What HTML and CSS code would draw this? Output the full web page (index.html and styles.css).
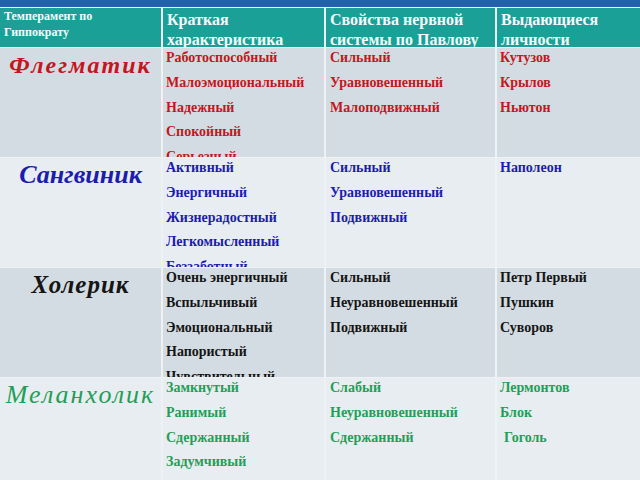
FILE: index.html
```html
<!DOCTYPE html>
<html lang="ru">
<head>
<meta charset="utf-8">
<link rel="stylesheet" href="styles.css">
</head>
<body>
<div class="topbar"></div>
<div class="table">
  <div class="hd hd-small">Темперамент по Гиппократу</div>
  <div class="hd hd-reg">Краткая характеристика</div>
  <div class="hd hd-reg">Свойства нервной системы по Павлову</div>
  <div class="hd">Выдающиеся личности</div>

  <div class="cell name row-a red"><span class="nm nm-fleg">Флегматик</span></div>
  <div class="cell row-a red"><ul class="lst"><li>Работоспособный</li><li>Малоэмоциональный</li><li>Надежный</li><li>Спокойный</li><li>Серьезный</li></ul></div>
  <div class="cell c3 row-a red"><ul class="lst"><li>Сильный</li><li>Уравновешенный</li><li>Малоподвижный</li></ul></div>
  <div class="cell c4 row-a red"><ul class="lst"><li>Кутузов</li><li>Крылов</li><li>Ньютон</li></ul></div>

  <div class="cell name row-b blue"><span class="nm nm-sang">Сангвиник</span></div>
  <div class="cell row-b blue"><ul class="lst"><li>Активный</li><li>Энергичный</li><li>Жизнерадостный</li><li>Легкомысленный</li><li>Беззаботный</li></ul></div>
  <div class="cell c3 row-b blue"><ul class="lst"><li>Сильный</li><li>Уравновешенный</li><li>Подвижный</li></ul></div>
  <div class="cell c4 row-b blue"><ul class="lst"><li>Наполеон</li></ul></div>

  <div class="cell name row-a black"><span class="nm nm-chol">Холерик</span></div>
  <div class="cell row-a black"><ul class="lst"><li>Очень энергичный</li><li>Вспыльчивый</li><li>Эмоциональный</li><li>Напористый</li><li>Чувствительный</li></ul></div>
  <div class="cell c3 row-a black"><ul class="lst"><li>Сильный</li><li>Неуравновешенный</li><li>Подвижный</li></ul></div>
  <div class="cell c4 row-a black"><ul class="lst"><li>Петр Первый</li><li>Пушкин</li><li>Суворов</li></ul></div>

  <div class="cell name row-b green"><span class="nm nm-mel">Меланхолик</span></div>
  <div class="cell row-b green"><ul class="lst"><li>Замкнутый</li><li>Ранимый</li><li>Сдержанный</li><li>Задумчивый</li></ul></div>
  <div class="cell c3 row-b green"><ul class="lst"><li>Слабый</li><li>Неуравновешенный</li><li>Сдержанный</li></ul></div>
  <div class="cell c4 row-b green"><ul class="lst"><li>Лермонтов</li><li>Блок</li><li class="indent">Гоголь</li></ul></div>
</div>
</body>
</html>
```

FILE: styles.css
```css
html, body {
  margin: 0;
  padding: 0;
  width: 640px;
  height: 480px;
  overflow: hidden;
  background: #eef2f5;
  font-family: "Liberation Serif", "Times New Roman", serif;
}

.topbar {
  height: 7px;
  background: #2161ad;
}

.table {
  display: grid;
  grid-template-columns: 161px 161px 169px 1fr;
  grid-template-rows: 39px 109px 109px 109px 102px;
  column-gap: 2px;
  row-gap: 1px;
  padding-top: 1px;
  background: #eef2f5;
}

.hd {
  background: #1ba098;
  color: #f4fbfa;
  font-weight: bold;
  font-size: 16px;
  line-height: 20px;
  padding: 1.5px 0 0 4px;
  overflow: hidden;
}

.hd-small {
  font-size: 12px;
  line-height: 16px;
  padding: 0 50px 0 4px;
}

.cell {
  overflow: hidden;
  padding-left: 3px;
}

.c3 { padding-left: 4px; }
.c4 { padding-left: 3px; }

.row-a { background: #d4dce3; }
.row-b { background: #e8edf1; }

.red { color: #c4161d; }
.blue { color: #1c1cae; }
.black { color: #151515; }
.green { color: #1f9f57; }

.lst {
  list-style: none;
  margin: 0;
  padding: 0;
  display: flex;
  flex-direction: column;
  row-gap: 4.8px;
  font-weight: bold;
  font-size: 14px;
  line-height: 20px;
  white-space: nowrap;
}

.indent { padding-left: 4px; }

.name {
  padding-left: 0;
  text-align: center;
}

.nm {
  display: block;
  font-style: italic;
  font-weight: bold;
  white-space: nowrap;
  line-height: 30px;
  margin-top: 2px;
}

.nm-fleg { font-size: 24px; letter-spacing: 2px; }
.nm-sang { font-size: 26px; }
.nm-chol { font-size: 25px; letter-spacing: 1px; }
.nm-mel { font-size: 26px; font-weight: normal; letter-spacing: 2px; }
```
